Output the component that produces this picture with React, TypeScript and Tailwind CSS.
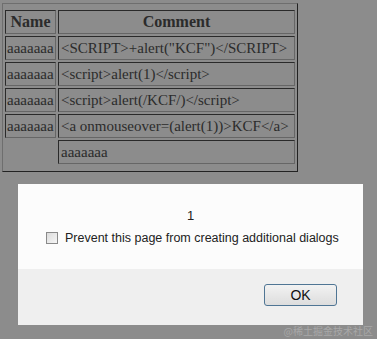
const rows = [
  { name: "aaaaaaa", comment: '<SCRIPT>+alert("KCF")</SCRIPT>' },
  { name: "aaaaaaa", comment: "<script>alert(1)</script>" },
  { name: "aaaaaaa", comment: "<script>alert(/KCF/)</script>" },
  { name: "aaaaaaa", comment: "<a onmouseover=(alert(1))>KCF</a>" },
  { name: "", comment: "aaaaaaa" },
];

const cell =
  "h-[24px] px-[1px] border border-t-[#2a2a2a] border-l-[#2a2a2a] border-b-[#666] border-r-[#666] whitespace-nowrap";

export default function App() {
  return (
    <div className="w-[377px] h-[339px] bg-[#8c8c8c] relative overflow-hidden">
      <div className="pt-[3px] pl-[2px]">
        <table
          className="border-separate border-spacing-[2px] pt-[4px] pb-[5px] border border-t-[#6e6e6e] border-l-[#6e6e6e] border-b-[#222] border-r-[#222] text-[#2b2b2b] text-[15px] leading-none"
          style={{ fontFamily: '"Liberation Serif", serif' }}
        >
          <thead>
            <tr>
              <th className={cell + " w-[51px] font-bold text-[16px]"}>Name</th>
              <th className={cell + " w-[237px] font-bold text-[16px]"}>Comment</th>
            </tr>
          </thead>
          <tbody>
            {rows.map((r, i) => (
              <tr key={i}>
                <td className={r.name ? cell : "h-[24px]"}>{r.name}</td>
                <td className={cell + " text-left pl-[2px]"}>{r.comment}</td>
              </tr>
            ))}
          </tbody>
        </table>
      </div>

      <div
        className="absolute left-[18px] top-[184px] w-[345px] h-[141px] flex flex-col text-[#222] text-[12.5px]"
        style={{ fontFamily: '"Liberation Sans", Arial, sans-serif' }}
      >
        <div className="h-[85px] bg-[#fcfcfc] flex flex-col items-center">
          <div className="mt-[25px] leading-none text-[13px]">1</div>
          <label className="mt-[7px] self-start ml-[28px] flex items-center gap-[7px]">
            <span className="w-[12px] h-[12px] border border-[#8a8a8a] bg-gradient-to-br from-[#dcdcdc] to-[#f6f6f6]" />
            <span>Prevent this page from creating additional dialogs</span>
          </label>
        </div>
        <div className="flex-1 bg-[#efefef] flex justify-end items-start">
          <button className="mt-[15px] mr-[26px] w-[73px] h-[22px] rounded-[3px] border border-[#4f7594] bg-gradient-to-b from-[#f2f2f2] to-[#dddddd] text-[14px] leading-none text-[#111]">
            OK
          </button>
        </div>
      </div>

      <div
        className="absolute right-[4px] bottom-[1px] text-[10px] text-[#a8a8a8]"
        style={{ fontFamily: '"Noto Sans CJK SC", sans-serif' }}
      >
        @稀土掘金技术社区
      </div>
    </div>
  );
}
